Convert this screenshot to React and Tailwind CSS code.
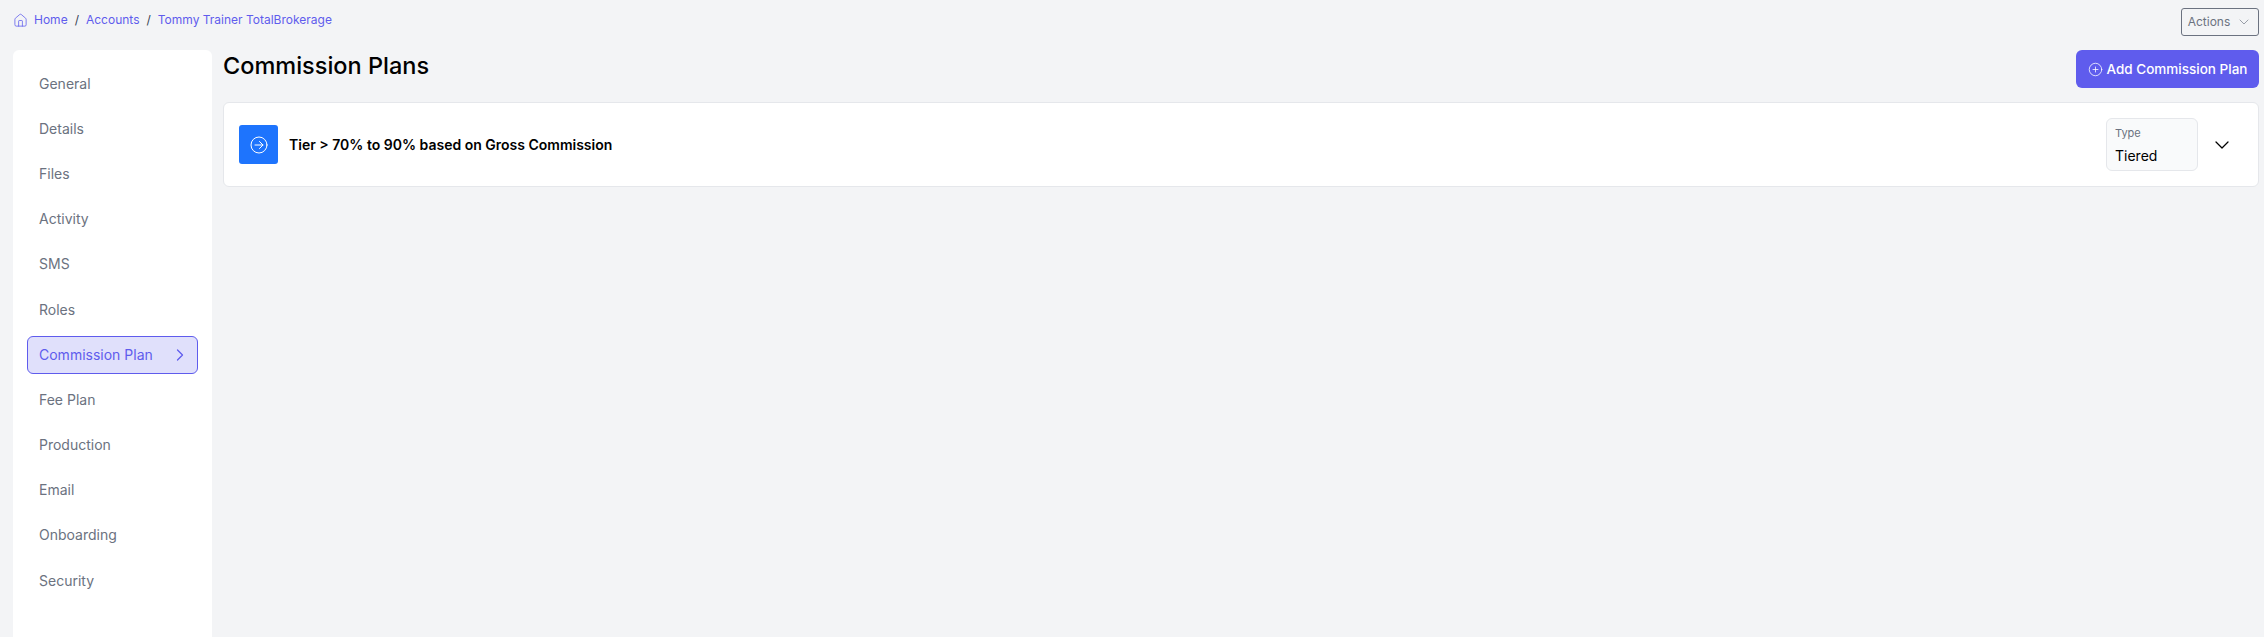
import { ChevronDown, ChevronRight, Home, PlusCircle } from "lucide-react";

const navItems = [
  "General",
  "Details",
  "Files",
  "Activity",
  "SMS",
  "Roles",
  "Commission Plan",
  "Fee Plan",
  "Production",
  "Email",
  "Onboarding",
  "Security",
];

const Breadcrumbs = () => (
  <div className="flex items-center text-xs leading-5 text-[#5f5ced]">
    <Home size={15} strokeWidth={1.25} className="mr-[6px]" />
    <span>Home</span>
    <span className="mx-[7px] text-gray-700">/</span>
    <span>Accounts</span>
    <span className="mx-[7px] text-gray-700">/</span>
    <span>Tommy Trainer TotalBrokerage</span>
  </div>
);

const Sidebar = () => (
  <div className="w-[199px] shrink-0 rounded-t-md bg-white px-[14px] pt-[11px]">
    {navItems.map((item) =>
      item === "Commission Plan" ? (
        <div
          key={item}
          className="my-[3.6px] flex h-[38px] items-center justify-between rounded-md border border-[#5f5ced] bg-[#e0e0fb] pl-[11px] pr-[7px] text-sm text-[#5f5ced]"
        >
          <span>{item}</span>
          <ChevronRight size={20} strokeWidth={1.5} />
        </div>
      ) : (
        <div
          key={item}
          className="flex h-[45.2px] items-center pl-3 text-sm text-[#6b7280]"
        >
          {item}
        </div>
      ),
    )}
  </div>
);

const PlanCard = () => (
  <div className="flex h-[85px] items-center justify-between rounded-md border border-[#e5e7eb] bg-white pl-[15px] pr-[24px]">
    <div className="flex items-center">
      <div className="flex h-[39px] w-[39px] items-center justify-center rounded-[3px] bg-[#1e74fd] text-white">
        <svg width="18" height="18" viewBox="0 0 18 18" fill="none" stroke="currentColor" strokeWidth="1" strokeLinecap="round" strokeLinejoin="round">
          <circle cx="9" cy="9" r="8" />
          <path d="M5 9h8M9.5 5.5 13 9l-3.5 3.5" />
        </svg>
      </div>
      <span className="ml-[11px] text-sm font-semibold text-black">
        Tier &gt; 70% to 90% based on Gross Commission
      </span>
    </div>
    <div className="flex items-center">
      <div className="flex h-[53px] w-[92px] flex-col rounded-md border border-[#e5e7eb] bg-[#f9fafb] pl-2 pt-[6px]">
        <span className="text-[11px] leading-4 text-[#6b7280]">Type</span>
        <span className="mt-[5px] text-sm leading-5 text-black">Tiered</span>
      </div>
      <ChevronDown size={24} strokeWidth={1.25} className="ml-[12px] text-black" />
    </div>
  </div>
);

export default function App() {
  return (
    <div className="flex h-[637px] flex-col overflow-hidden bg-[#f3f4f6] font-['Inter',sans-serif]">
      <div className="flex h-[50px] items-start justify-between pl-[13px] pr-[5px]">
        <div className="pt-[10px]">
          <Breadcrumbs />
        </div>
        <div className="mt-2 flex h-[28px] w-[78px] items-center justify-center gap-[6px] rounded-[3px] border border-[#6b7280] text-xs text-[#6b7280]">
          Actions
          <ChevronDown size={16} strokeWidth={1} />
        </div>
      </div>
      <div className="flex flex-1 pl-[13px] pr-[5px]">
        <Sidebar />
        <div className="ml-[11px] flex-1">
          <div className="flex h-[52px] items-start justify-between">
            <h1 className="text-[23.5px] font-medium leading-8 text-black">Commission Plans</h1>
            <button className="flex h-[38px] w-[183px] items-center justify-center gap-1 rounded-md bg-[#5f5ced] text-[13.5px] font-medium text-white">
              <PlusCircle size={15} strokeWidth={1.25} />
              Add Commission Plan
            </button>
          </div>
          <PlanCard />
        </div>
      </div>
    </div>
  );
}
